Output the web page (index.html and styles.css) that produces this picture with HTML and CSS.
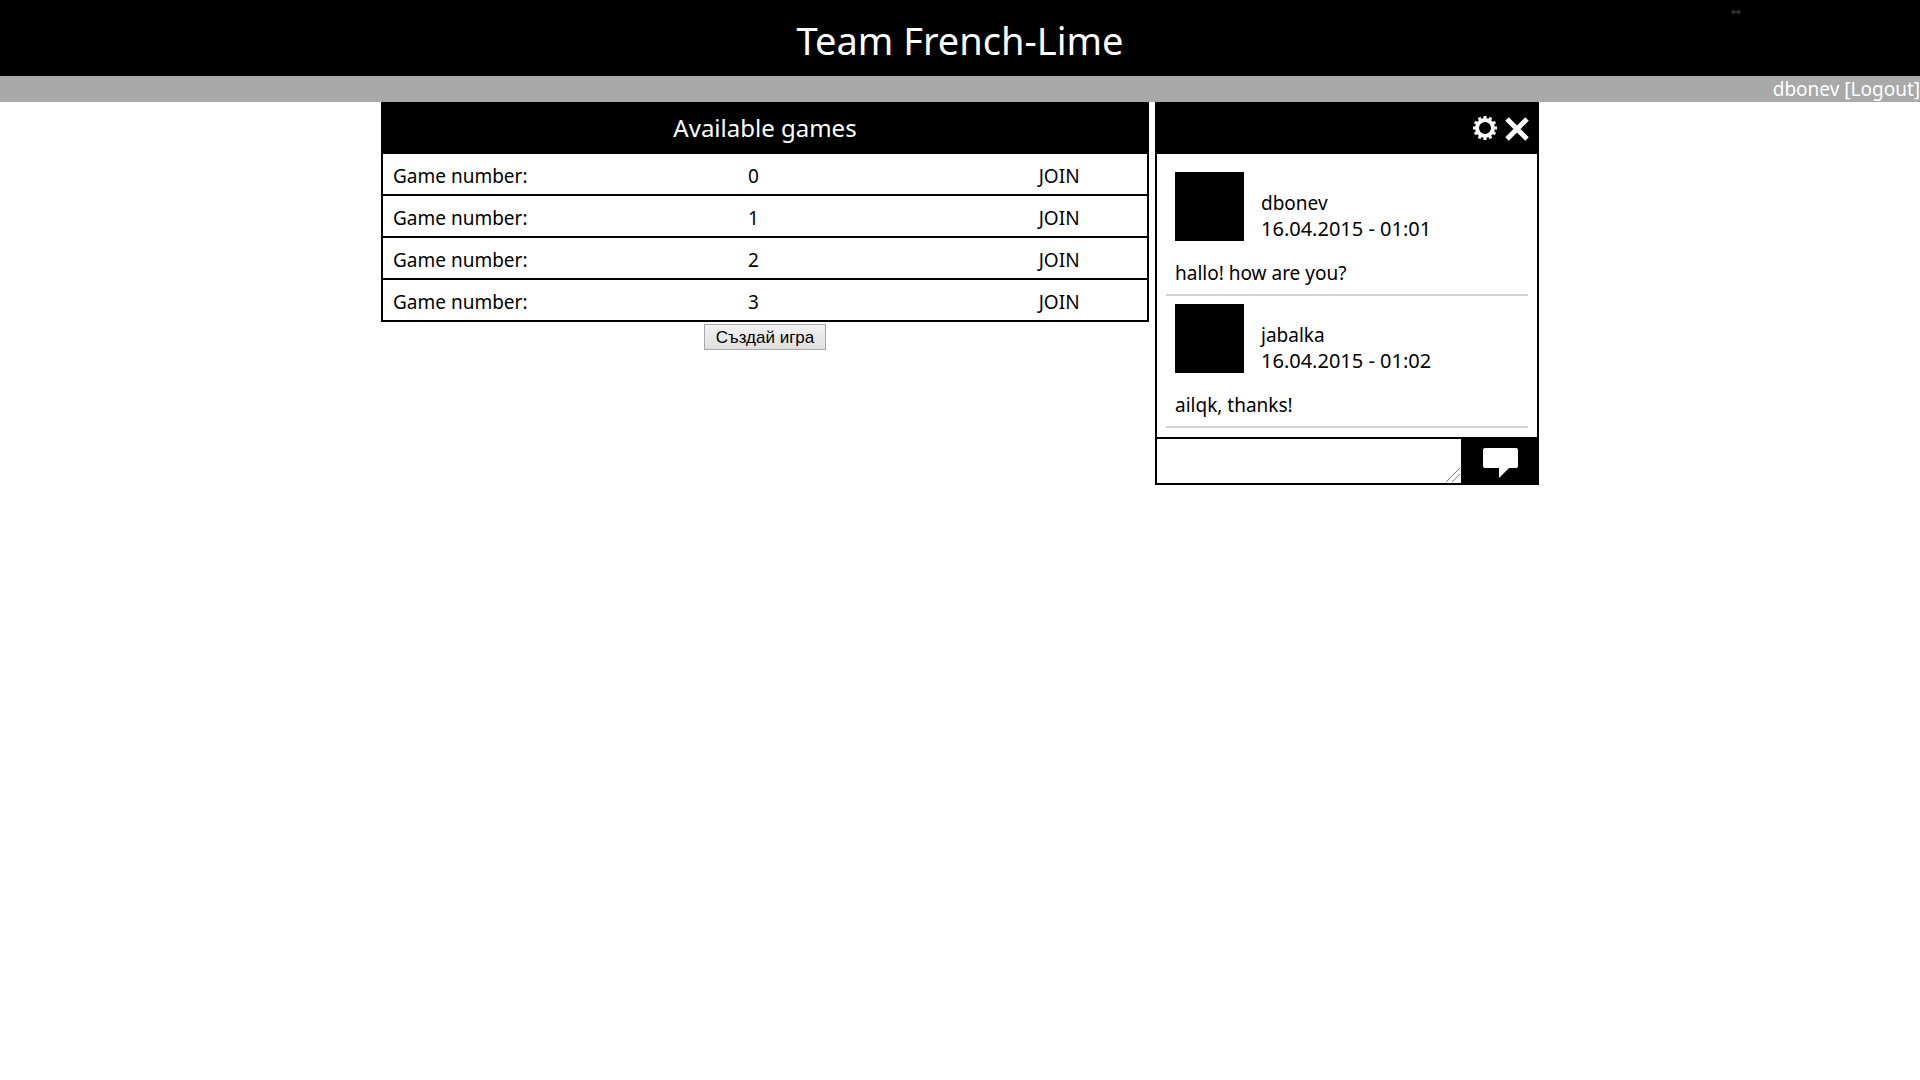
FILE: index.html
```html
<!DOCTYPE html>
<html lang="bg">
<head>
<meta charset="utf-8">
<meta name="viewport" content="width=device-width, initial-scale=1">
<title>Team French-Lime</title>
<link rel="stylesheet" href="styles.css">
</head>
<body>
<header class="site-header">
  <h1 class="site-title">Team French-Lime</h1>
  <svg class="resize-mark" viewBox="0 0 10 6" aria-hidden="true"><path d="M0 3 3 0V2H7V0L10 3 7 6V4H3V6Z"/></svg>
</header>
<nav class="user-bar"><span>dbonev</span> <a href="#logout">[Logout]</a></nav>
<main class="content">
  <section class="games">
    <table class="games-table">
      <colgroup><col class="col-label"><col class="col-number"><col class="col-join"></colgroup>
      <thead><tr><th colspan="3">Available games</th></tr></thead>
      <tbody>
        <tr><td>Game number:</td><td>0</td><td><a href="#game-0">JOIN</a></td></tr>
        <tr><td>Game number:</td><td>1</td><td><a href="#game-1">JOIN</a></td></tr>
        <tr><td>Game number:</td><td>2</td><td><a href="#game-2">JOIN</a></td></tr>
        <tr><td>Game number:</td><td>3</td><td><a href="#game-3">JOIN</a></td></tr>
      </tbody>
    </table>
    <button class="create-game" type="button">Създай игра</button>
  </section>
  <aside class="chat">
    <div class="chat-header">
      <button class="icon-button" type="button" aria-label="Settings">
        <svg width="26" height="26" viewBox="-13 -13 26 26"><circle r="8" fill="none" stroke="#fff" stroke-width="4"/><path d="M0-12V-9M0 9V12M-12 0H-9M9 0H12M-6-10.400-4.500-7.800M6-10.400 4.500-7.800M-6 10.400-4.500 7.800M6 10.400 4.500 7.800M-10.400-6-7.800-4.500M10.400-6 7.800-4.500M-10.400 6-7.800 4.500M10.400 6 7.800 4.500" stroke="#fff" stroke-width="3"/></svg>
      </button>
      <button class="icon-button" type="button" aria-label="Close">
        <svg width="26" height="26" viewBox="0 0 26 26"><path d="M3 4 23 24M23 4 3 24" stroke="#fff" stroke-width="5"/></svg>
      </button>
    </div>
    <div class="messages">
      <article class="message">
        <div class="message-head"><div class="avatar"></div><div class="byline"><div>dbonev</div><time>16.04.2015 - 01:01</time></div></div>
        <p class="message-text">hallo! how are you?</p>
      </article>
      <article class="message">
        <div class="message-head"><div class="avatar"></div><div class="byline"><div>jabalka</div><time>16.04.2015 - 01:02</time></div></div>
        <p class="message-text">ailqk, thanks!</p>
      </article>
    </div>
    <form class="chat-form">
      <div class="input-wrap">
        <textarea class="chat-input" aria-label="Message"></textarea>
        <svg class="grip" viewBox="0 0 14 14" aria-hidden="true"><path d="M0 14 14 0M6 14 14 6"/></svg>
      </div>
      <button class="send" type="button" aria-label="Send">
        <svg width="36" height="30" viewBox="0 0 36 30"><path d="M2 0H33Q35 0 35 2V18Q35 20 33 20H26L16 30V20H2Q0 20 0 18V2Q0 0 2 0Z" fill="#fff"/></svg>
      </button>
    </form>
  </aside>
</main>
</body>
</html>
```
FILE: styles.css
```css
* { box-sizing: border-box; }
body { margin: 0; background: #fff; color: #000; font: 19px/26px Tahoma, "Noto Sans", sans-serif; }
a { color: inherit; text-decoration: none; }
button { font: inherit; cursor: pointer; }

.site-header { position: relative; background: #000; color: #fff; padding: 16px 0 12px; }
.site-title { margin: 0; font-size: 38px; font-weight: 400; line-height: 48px; text-align: center; }
.resize-mark { position: absolute; top: 9px; right: 179px; width: 10px; height: 6px; fill: #333; }
.user-bar { padding-top: 1px; background: #a9a9a9; color: #fff; line-height: 25px; text-align: right; }

.content { display: flex; justify-content: center; align-items: flex-start; gap: 6px; }
.games { width: 40%; text-align: center; }
.games-table { width: 100%; table-layout: fixed; border: 2px solid #000; border-collapse: separate; border-spacing: 0; }
.col-label { width: 20%; }
.col-number { width: 57%; }
.col-join { width: 23%; }
.games-table th { height: 50px; padding: 0 0 2px; background: #000; color: #fff; font-size: 24px; font-weight: 400; }
.games-table td { height: 42px; padding: 4px 0 0; border-bottom: 2px solid #000; white-space: nowrap; }
.games-table td:first-child { padding-left: 10px; text-align: left; }
.games-table tr:last-child td { height: 40px; border-bottom: 0; }
.create-game { display: block; margin: 2px auto 0; padding: 1px 11px 0; height: 26px; border: 1px solid #a9a9a9; background: linear-gradient(#f2f2f2, #dfdfdf); color: #000; font: 17px/22px Arial, "Liberation Sans", sans-serif; }

.chat { width: 20%; border: 2px solid #000; }
.chat-header { display: flex; justify-content: flex-end; align-items: center; gap: 6px; height: 50px; padding: 0 7px 2px; background: #000; }
.icon-button { display: flex; padding: 0; border: 0; background: none; }
.messages { padding: 10px 9px 9px; }
.message { padding: 8px 9px; border-bottom: 2px solid #d3d3d3; }
.message-head { display: flex; align-items: flex-start; gap: 17px; }
.avatar { width: 69px; height: 69px; background: #000; }
.byline { padding-top: 18px; }
.byline time { display: block; height: 25px; font-size: 20px; }
.message-text { margin: 19px 0 0; }
.chat-form { display: flex; height: 46px; border-top: 2px solid #000; }
.input-wrap { position: relative; display: flex; width: 80%; }
.chat-input { width: 100%; padding: 4px; border: 0; background: #fff; font: inherit; resize: none; }
.grip { position: absolute; right: 1px; bottom: 1px; width: 14px; height: 14px; fill: none; stroke: #808080; stroke-width: 1; pointer-events: none; }
.send { display: flex; align-items: center; justify-content: center; width: 20%; padding: 3px 0 0 3px; border: 0; background: #000; }
```
